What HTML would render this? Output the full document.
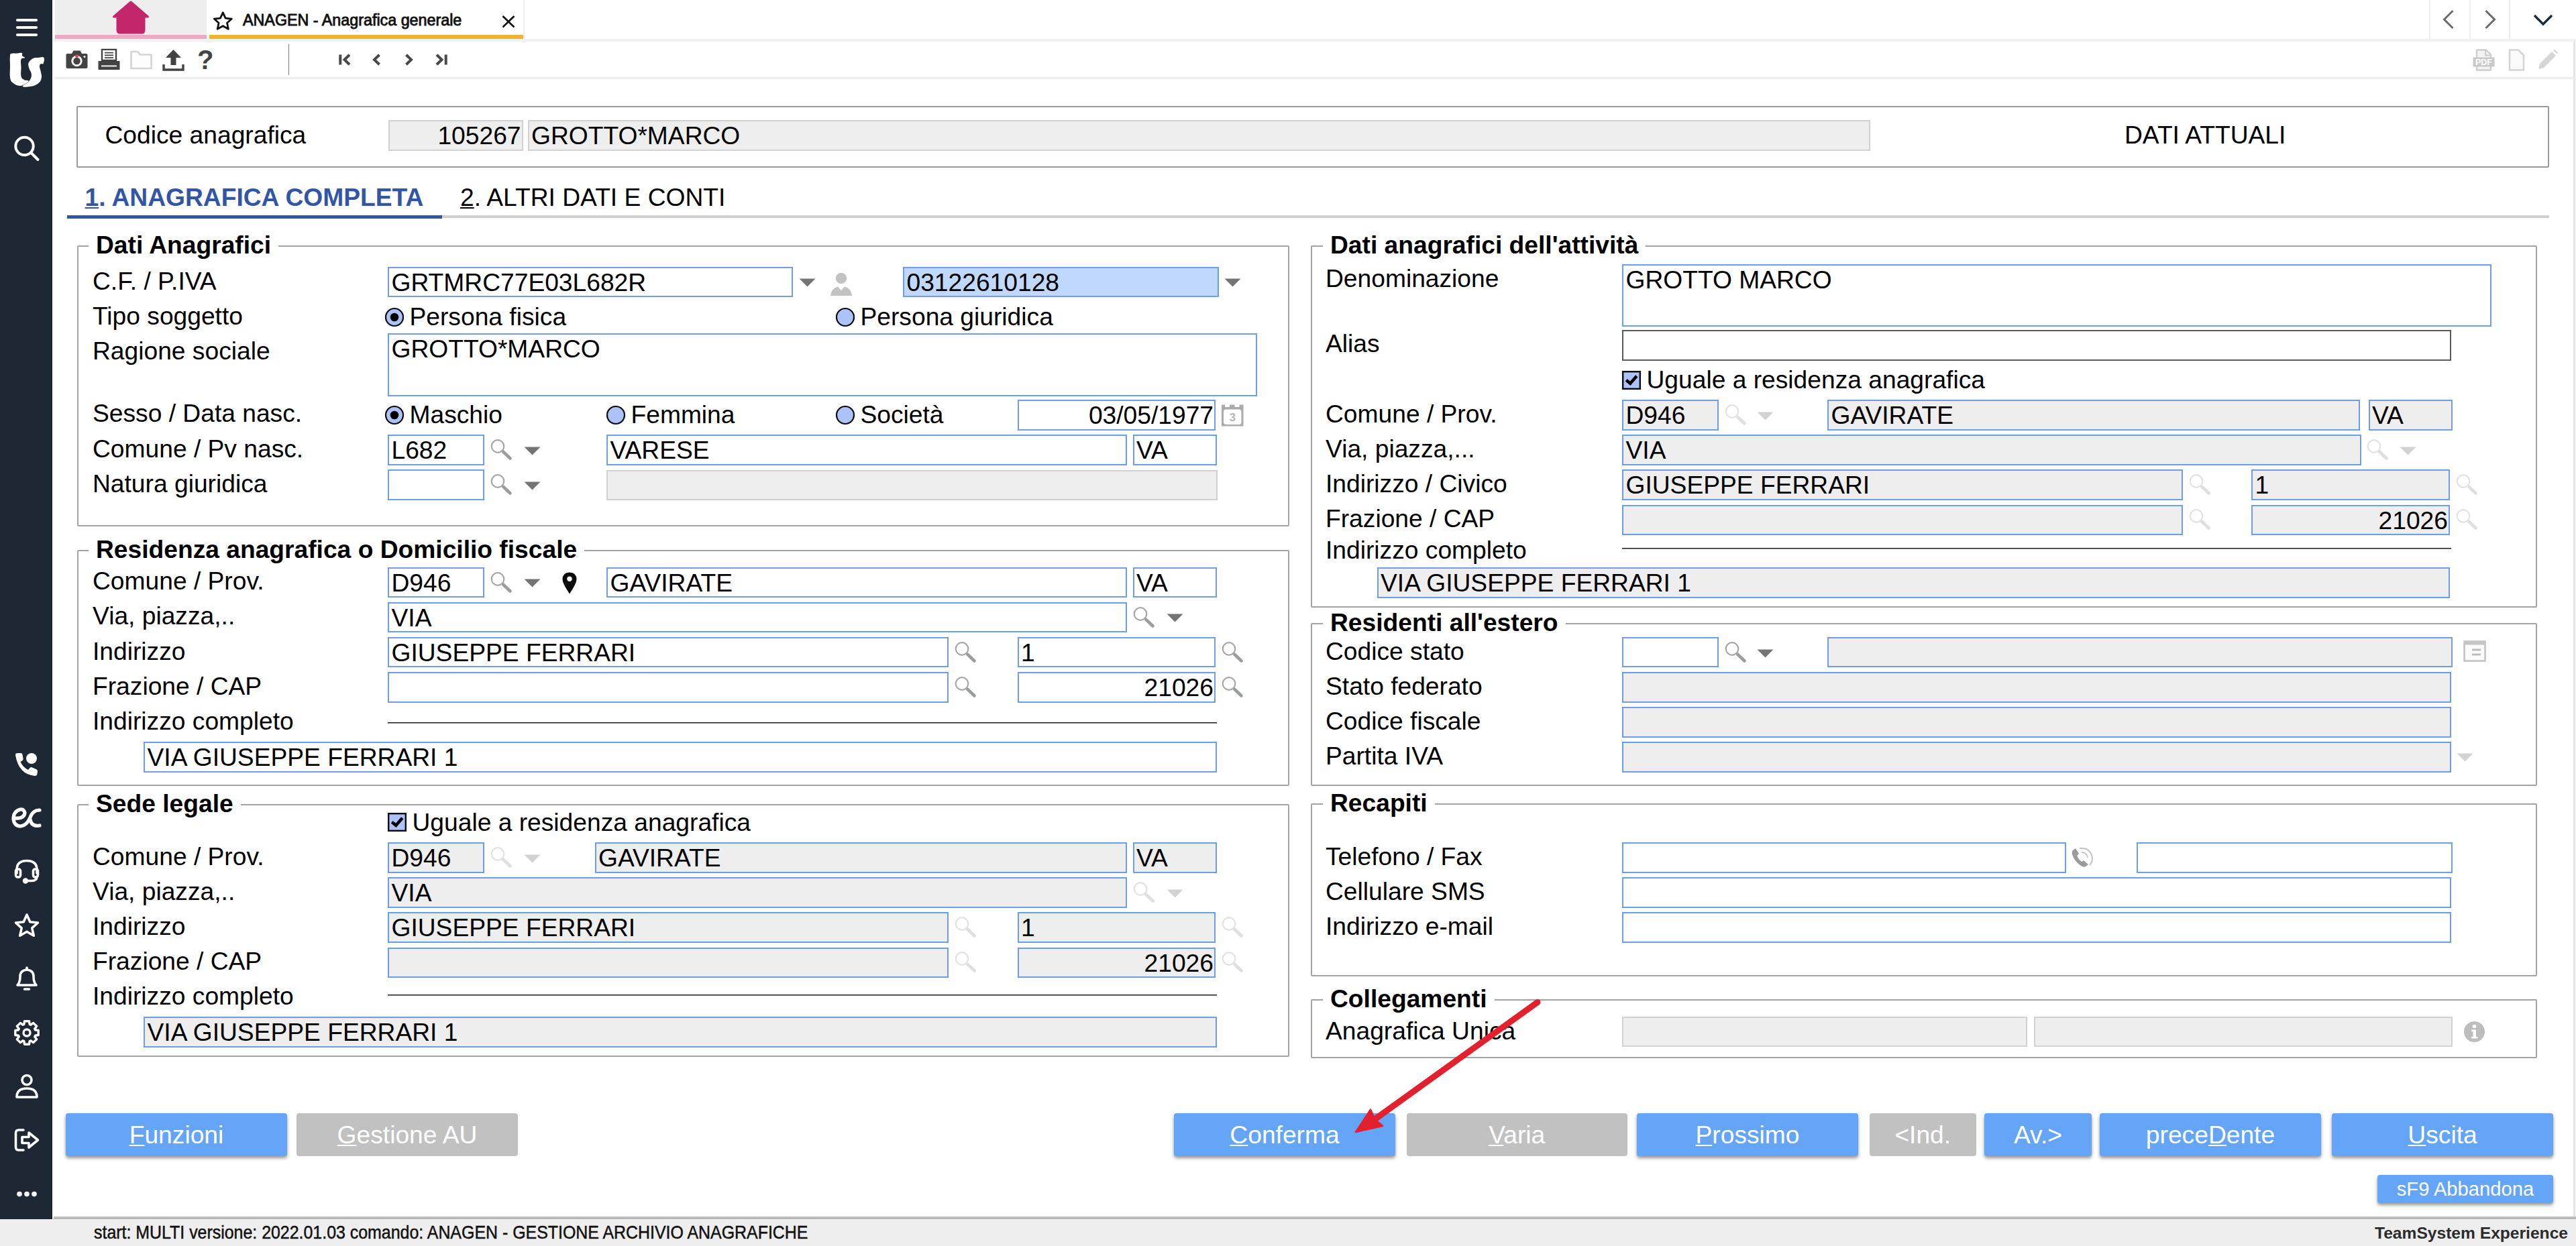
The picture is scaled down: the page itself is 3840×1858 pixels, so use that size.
<!DOCTYPE html>
<html lang="it"><head><meta charset="utf-8"><title>ANAGEN - Anagrafica generale</title>
<style>
html,body{margin:0;padding:0;}
body{width:3840px;height:1858px;overflow:hidden;background:#fff;position:relative;
 font-family:"Liberation Sans",sans-serif;font-size:37.2px;color:#000;}
.a{position:absolute;box-sizing:border-box;white-space:nowrap;}
.t{position:absolute;white-space:nowrap;line-height:45px;height:45px;}
.in{position:absolute;box-sizing:border-box;white-space:nowrap;height:45.6px;line-height:42.2px;
 border:2px solid #6c9fe8;background:#fff;padding:0 4px 0 3.5px;overflow:hidden;}
.in.d{background:#eeeeee;}
.in.r{text-align:right;padding-right:1px;}
.in.hl{background:#c0d8fb;}
.in.g{border:2px solid #d2d2d2;background:#eeeeee;}
.grp{position:absolute;box-sizing:border-box;border:2px solid #a3a3a3;border-radius:2px;}
.lg{position:absolute;white-space:nowrap;font-weight:bold;background:#fff;line-height:44px;height:44px;padding:0 11px;}
.btn{position:absolute;box-sizing:border-box;text-align:center;color:#fff;border-radius:4px;white-space:nowrap;}
.btn.b{background:#64a5f8;box-shadow:0 3px 5px rgba(0,0,0,.42);}
.btn.g{background:#c1c1c1;}
u{text-decoration-thickness:2.4px;text-underline-offset:2px;}
svg{position:absolute;overflow:visible;}
</style></head>
<body>
<div class="a" style="left:0;top:0;width:78px;height:1818px;background:#1e2835;"></div>
<svg style="left:0;top:0" width="78" height="70"><g stroke="#fff" fill="none" stroke-linecap="round" stroke-linejoin="round" stroke-width="4.2"><line x1="26" y1="30" x2="54" y2="30"/><line x1="26" y1="41" x2="54" y2="41"/><line x1="26" y1="52" x2="54" y2="52"/></g></svg>
<svg style="left:15px;top:79px" width="52" height="52" viewBox="0 0 52 52"><path d="M0.0 4.0 C0.6 -0.0 0.9 1.5 3.0 0.8 C5.1 0.1 6.9 0.8 10.0 0.6 C13.1 0.4 15.9 -0.7 17.6 0.0 C19.3 0.7 17.2 2.5 18.1 4.0 C19.0 5.5 22.3 6.1 22.0 7.3 C21.7 8.5 17.7 6.4 16.5 9.5 C15.3 12.6 16.5 16.7 16.5 22.0 C16.5 27.3 15.6 31.0 16.5 34.8 C17.4 38.6 18.6 38.5 21.0 39.9 C23.4 41.3 27.5 40.2 27.7 41.6 C27.9 43.0 24.8 45.1 22.0 46.6 C19.2 48.1 17.8 49.2 14.2 48.9 C10.6 48.6 7.6 47.4 4.7 45.0 C1.8 42.6 1.2 42.9 0.2 37.6 C-0.8 32.4 0.0 27.1 0.0 20.0 C-0.0 12.9 -0.6 8.0 0.0 4.0Z" fill="#fff"/><path d="M50.2 6.7 C48.6 4.9 45.3 6.7 42.0 7.0 C38.7 7.3 37.4 6.3 34.4 7.9 C31.4 9.5 29.0 11.5 27.7 14.6 C26.4 17.7 27.5 19.2 28.3 22.5 C29.1 25.8 31.0 27.1 31.6 30.3 C32.2 33.5 32.0 34.8 31.0 37.6 C29.9 40.4 29.2 41.2 26.6 43.8 C24.0 46.4 18.0 48.7 18.7 50.0 C19.4 51.3 25.3 50.8 30.0 50.0 C34.7 49.2 37.7 48.6 41.2 46.0 C44.7 43.4 45.9 41.5 46.8 37.6 C47.7 33.7 46.3 31.2 45.7 27.5 C45.1 23.8 44.0 22.6 44.0 20.2 C44.0 17.8 44.5 17.2 45.7 16.3 C46.9 15.4 48.7 17.7 49.6 15.7 C50.5 13.7 51.8 8.5 50.2 6.7Z" fill="#fff"/></svg>
<svg style="left:20px;top:202px" width="40" height="40" viewBox="0 0 40 40"><g stroke="#fff" fill="none" stroke-linecap="round" stroke-linejoin="round" stroke-width="4"><circle cx="16.500" cy="16" r="13.200"/><line x1="26" y1="25.500" x2="36.500" y2="36"/></g></svg>
<svg style="left:20px;top:1120px" width="40" height="40" viewBox="0 0 40 40"><g fill="#fff"><circle cx="27" cy="11" r="8"/><path d="M3 6 Q3 3 6 3 L11 3 Q13 3 13.5 5 L14.5 11 Q15 13 13.5 14 L10.5 16 Q14 24 22 28 L24.5 25 Q26 23.5 28 24.5 L34 27 Q36 28 36 30 L35.5 34 Q35 37 32 37 Q8 35 3 6 Z"/></g></svg>
<svg style="left:16px;top:1202px" width="48" height="36" viewBox="0 0 48 36"><g stroke="#fff" fill="none" stroke-linecap="round" stroke-linejoin="round" stroke-width="5.2"><path d="M7 18 Q20 19 21 10 Q20 4 14 5 Q4 8 4 19 Q5 30 15 30 Q24 29 29 17 Q33 6 43 6"/><path d="M43 29 Q31 31 29 20"/></g></svg>
<svg style="left:20px;top:1280px" width="40" height="40" viewBox="0 0 40 40"><g stroke="#fff" fill="none" stroke-linecap="round" stroke-linejoin="round" stroke-width="3.6"><path d="M5 22 V17 Q5 3.5 20 3.5 Q35 3.5 35 17 V22"/><rect x="3.5" y="16" width="7" height="12" rx="3"/><rect x="29.500" y="16" width="7" height="12" rx="3"/><path d="M35 27 Q35 33.500 27 33.500 H21"/></g><circle cx="18" cy="33.500" r="4.200" fill="#fff"/></svg>
<svg style="left:20px;top:1360px" width="40" height="40" viewBox="0 0 40 40"><g stroke="#fff" fill="none" stroke-linecap="round" stroke-linejoin="round" stroke-width="3.600"><path d="M20 4 L24.800 14.800 L36.500 16 L27.700 23.800 L30.300 35.300 L20 29.300 L9.700 35.300 L12.300 23.800 L3.500 16 L15.200 14.800 Z"/></g></svg>
<svg style="left:20px;top:1440px" width="40" height="40" viewBox="0 0 40 40"><g stroke="#fff" fill="none" stroke-linecap="round" stroke-linejoin="round" stroke-width="3.600"><path d="M6 29 Q10 25 10 16 Q10 7 20 6 Q30 7 30 16 Q30 25 34 29 Z"/><path d="M20 6 V3"/><path d="M16.500 35 H23.500"/></g></svg>
<svg style="left:20px;top:1520px" width="40" height="40" viewBox="0 0 40 40"><g stroke="#fff" fill="none" stroke-linecap="round" stroke-linejoin="round" stroke-width="3.400"><path d="M16.5 2.8 L23.5 2.8 L24.2 7.5 L25.9 8.2 L29.7 5.4 L34.6 10.3 L31.8 14.1 L32.5 15.8 L37.2 16.5 L37.2 23.5 L32.5 24.2 L31.8 25.9 L34.6 29.7 L29.7 34.6 L25.9 31.8 L24.2 32.5 L23.5 37.2 L16.5 37.2 L15.8 32.5 L14.1 31.8 L10.3 34.6 L5.4 29.7 L8.2 25.9 L7.5 24.2 L2.8 23.5 L2.8 16.5 L7.5 15.8 L8.2 14.1 L5.4 10.3 L10.3 5.4 L14.1 8.2 L15.8 7.5Z"/><circle cx="20" cy="20" r="5"/></g></svg>
<svg style="left:20px;top:1600px" width="40" height="40" viewBox="0 0 40 40"><g stroke="#fff" fill="none" stroke-linecap="round" stroke-linejoin="round" stroke-width="3.600"><circle cx="20" cy="10.500" r="7"/><path d="M5 36 Q5 23 20 23 Q35 23 35 36 Z"/></g></svg>
<svg style="left:20px;top:1680px" width="40" height="40" viewBox="0 0 40 40"><g stroke="#fff" fill="none" stroke-linecap="round" stroke-linejoin="round" stroke-width="3.600"><path d="M15 5 H8 Q3.500 5 3.500 9.500 V30.500 Q3.500 35 8 35 H15"/><path d="M13 15.500 H23 V9 L36.500 20 L23 31 V24.500 H13 Z"/></g></svg>
<svg style="left:20px;top:1770px" width="40" height="20"><g fill="#fff"><circle cx="9" cy="10.500" r="3.800"/><circle cx="20" cy="10.500" r="3.800"/><circle cx="31" cy="10.500" r="3.800"/></g></svg>
<div class="a" style="left:78px;top:58px;width:3762px;height:4px;background:#f1f1f1;"></div>
<div class="a" style="left:82px;top:0;width:226px;height:52px;background:#eeeeee;"></div>
<div class="a" style="left:82px;top:52px;width:226px;height:6px;background:#eba9c4;"></div>
<svg style="left:160px;top:0" width="70" height="52" viewBox="0 0 70 52"><path d="M35 3 L60.500 25 H55 V45 Q55 49 51 49 H19 Q15 49 15 45 V25 H9.500 Z" fill="#c3266b" stroke="#c3266b" stroke-width="3" stroke-linejoin="round"/></svg>
<div class="a" style="left:312px;top:52px;width:468px;height:6px;background:#f0b32b;"></div>
<svg style="left:316.500px;top:15.500px" width="30.600" height="28.800" viewBox="0 0 34 32"><path d="M17 3 L21.300 12.300 L31.500 13.400 L23.900 20.300 L26 30.300 L17 25.200 L8 30.300 L10.100 20.300 L2.500 13.400 L12.700 12.300 Z" fill="none" stroke="#111" stroke-width="3.100" stroke-linejoin="round"/></svg>
<div class="a" id="tabtitle" style="left:362px;top:10px;height:40px;line-height:40px;font-size:23.300px;color:#111;-webkit-text-stroke:0.850px #111;">ANAGEN - Anagrafica generale</div>
<svg style="left:746px;top:21px" width="24" height="22"><path d="M3.500 3 L20.500 19.500 M20.500 3 L3.500 19.500" stroke="#111" stroke-width="2.600" fill="none"/></svg>
<div class="a" style="left:780px;top:0;width:2px;height:58px;background:#efefef;"></div>
<div class="a" style="left:3621px;top:0;width:2px;height:58px;background:#ececec;"></div>
<div class="a" style="left:3681px;top:0;width:2px;height:58px;background:#ececec;"></div>
<div class="a" style="left:3740px;top:0;width:2px;height:58px;background:#ececec;"></div>
<svg style="left:3638px;top:12px" width="24" height="34"><path d="M18.500 4 L5.500 17 L18.500 30" stroke="#6a6a6a" stroke-width="3" fill="none"/></svg>
<svg style="left:3700px;top:12px" width="24" height="34"><path d="M5.500 4 L18.500 17 L5.500 30" stroke="#6a6a6a" stroke-width="3" fill="none"/></svg>
<svg style="left:3774px;top:18px" width="34" height="24"><path d="M4 5 L17 18 L30 5" stroke="#1d2c3c" stroke-width="3.400" fill="none"/></svg>
<div class="a" style="left:3836px;top:61px;width:3px;height:1754px;background:#e4e4e4;"></div>
<div class="a" style="left:82px;top:115px;width:3758px;height:3px;background:#ededed;"></div>
<div class="a" style="left:430px;top:66px;width:1px;height:46px;background:#7a7a7a;"></div>
<svg style="left:98px;top:73px" width="33" height="31" viewBox="0 0 33 31"><path d="M2.500 7 H9 L11.500 2.500 H21.500 L24 7 H30.500 Q32.500 7 32.500 9 V27 Q32.500 29 30.500 29 H2.500 Q0.500 29 0.500 27 V9 Q0.500 7 2.500 7 Z" fill="#434343"/><circle cx="16.500" cy="18" r="8.200" fill="#f4f4f4"/><circle cx="16.500" cy="18" r="5.200" fill="#444"/><circle cx="16.500" cy="10.500" r="2.400" fill="#d8443c"/><circle cx="28" cy="11.500" r="1.600" fill="#eee"/></svg>
<svg style="left:146px;top:73px" width="33" height="32" viewBox="0 0 33 34" preserveAspectRatio="none"><path d="M6 1 H27 V18 H6 Z" fill="#fff" stroke="#434343" stroke-width="2.400"/><path d="M10 6 H23 M10 10 H23 M10 14 H23" stroke="#434343" stroke-width="1.800"/><path d="M0.500 19 H32.500 V33 H0.500 Z" fill="#434343"/><path d="M5 27 H28" stroke="#eee" stroke-width="2.200"/></svg>
<svg style="left:194px;top:75px" width="33" height="29" viewBox="0 0 33 29"><path d="M1.500 2 H11 L14.500 6.500 H31.500 V27 H1.500 Z" fill="#fdfdfd" stroke="#d4d4d4" stroke-width="2.600" stroke-linejoin="round"/></svg>
<svg style="left:242px;top:73px" width="33" height="33" viewBox="0 0 33 33"><path d="M16.500 1 L28 13 H20.500 V24 H12.500 V13 H5 Z" fill="#434343"/><path d="M2 23 V31 H31 V23" fill="none" stroke="#434343" stroke-width="3.400"/></svg>
<div class="a" style="left:294px;top:64px;height:50px;line-height:50px;font-size:40px;font-weight:bold;color:#434343;">?</div>
<svg style="left:503px;top:78px" width="22" height="22"><path d="M4.300 3.500 V18.500 M18 3.800 L10.500 11 L18 18.200" stroke="#484848" stroke-width="4" fill="none"/></svg>
<svg style="left:552px;top:78px" width="18" height="22"><path d="M13.500 3.800 L6 11 L13.500 18.200" stroke="#484848" stroke-width="4" fill="none"/></svg>
<svg style="left:601px;top:78px" width="18" height="22"><path d="M4.500 3.800 L12 11 L4.500 18.200" stroke="#484848" stroke-width="4" fill="none"/></svg>
<svg style="left:647px;top:78px" width="22" height="22"><path d="M17.700 3.500 V18.500 M4 3.800 L11.500 11 L4 18.200" stroke="#484848" stroke-width="4" fill="none"/></svg>
<svg style="left:3686px;top:73px" width="33" height="33" viewBox="0 0 33 33"><path d="M6 1.500 H20 L27 8.500 V31.500 H6 Z" fill="#f3f3f3" stroke="#cdcdcd" stroke-width="2.400" stroke-linejoin="round"/><path d="M19 1.500 V9.500 H27" fill="none" stroke="#cdcdcd" stroke-width="2"/><rect x="0.500" y="12.500" width="32" height="14" fill="#c9c9c9"/><text x="16.500" y="24" font-size="12.500" font-weight="bold" fill="#fff" text-anchor="middle" font-family="Liberation Sans, sans-serif">PDF</text></svg>
<svg style="left:3739px;top:73px" width="25" height="33" viewBox="0 0 25 33"><path d="M2 1.500 H15 L23 9.500 V31.500 H2 Z" fill="#fafafa" stroke="#d4d4d4" stroke-width="2.600" stroke-linejoin="round"/></svg>
<svg style="left:3781px;top:73px" width="33" height="33" viewBox="0 0 33 33"><path d="M3 30 L5 22 L23 4 L29 10 L11 28 Z" fill="#d6d6d6"/><path d="M25 2 L27 0.500 L32 5.500 L30.500 7.500 Z" fill="#d6d6d6"/></svg>
<div class="grp" style="left:114px;top:158px;width:3686px;height:92px;border-color:#9a9a9a;"></div>
<div class="t" style="left:156.5px;top:179.2px;">Codice anagrafica</div>
<div class="in g r" style="left:578.5px;top:179.4px;width:201.5px;height:46.1px;padding-right:1.5px;">105267</div>
<div class="in g" style="left:786.5px;top:179.4px;width:2001.0px;height:46.1px;">GROTTO*MARCO</div>
<div class="t" style="left:3167px;top:179.2px;">DATI ATTUALI</div>
<div class="a" style="left:100px;top:321px;width:3700px;height:4px;background:#cfcfcf;"></div>
<div class="a" style="left:100px;top:320.500px;width:559px;height:5px;background:#3457a5;"></div>
<div class="t" style="left:126.5px;top:272.1px;color:#3256a5;"><b><u>1</u>. ANAGRAFICA COMPLETA</b></div>
<div class="t" style="left:686px;top:272.1px;"><u>2</u>. ALTRI DATI E CONTI</div>
<div class="grp" style="left:115px;top:366px;width:1807px;height:419px;"></div>
<div class="lg" style="left:132px;top:343px;">Dati Anagrafici</div>
<div class="t" style="left:138px;top:396.8px;">C.F. / P.IVA</div>
<div class="in " style="left:578.0px;top:397.9px;width:604.0px;">GRTMRC77E03L682R</div>
<svg style="left:1190.5px;top:415px;opacity:1.0" width="25" height="13" viewBox="0 0 25 13"><path d="M0.5 0.5H24.5L12.5 12.5Z" fill="#747474"/></svg>
<svg style="left:1237px;top:405px" width="34" height="38" viewBox="0 0 34 38"><g fill="#c2c2c2"><circle cx="17" cy="10" r="8.200"/><path d="M1 36 Q3 24 12 22.500 L17 28 L22 22.500 Q31 24 33 36 Z"/></g></svg>
<div class="in hl" style="left:1346.0px;top:397.9px;width:471.0px;">03122610128</div>
<svg style="left:1825px;top:415px;opacity:1.0" width="25" height="13" viewBox="0 0 25 13"><path d="M0.5 0.5H24.5L12.5 12.5Z" fill="#747474"/></svg>
<div class="t" style="left:138px;top:448.8px;">Tipo soggetto</div>
<svg style="left:573px;top:458px" width="30" height="30"><circle cx="15" cy="15" r="13" fill="#adc2f8" stroke="#0c0c0c" stroke-width="2.200"/><circle cx="15" cy="15" r="6.300" fill="#000"/></svg>
<div class="t" style="left:610.5px;top:449.7px;">Persona fisica</div>
<svg style="left:1245px;top:458px" width="30" height="30"><circle cx="15" cy="15" r="13" fill="#adc2f8" stroke="#0c0c0c" stroke-width="2.200"/></svg>
<div class="t" style="left:1282.5px;top:449.7px;">Persona giuridica</div>
<div class="t" style="left:138px;top:501.0px;">Ragione sociale</div>
<div class="in " style="left:578.0px;top:497.4px;width:1296.0px;height:93.6px;">GROTTO*MARCO</div>
<div class="t" style="left:138px;top:594.3px;">Sesso / Data nasc.</div>
<svg style="left:573px;top:604px" width="30" height="30"><circle cx="15" cy="15" r="13" fill="#adc2f8" stroke="#0c0c0c" stroke-width="2.200"/><circle cx="15" cy="15" r="6.300" fill="#000"/></svg>
<div class="t" style="left:610.5px;top:595.7px;">Maschio</div>
<svg style="left:903px;top:604px" width="30" height="30"><circle cx="15" cy="15" r="13" fill="#adc2f8" stroke="#0c0c0c" stroke-width="2.200"/></svg>
<div class="t" style="left:940.5px;top:595.7px;">Femmina</div>
<svg style="left:1245px;top:604px" width="30" height="30"><circle cx="15" cy="15" r="13" fill="#adc2f8" stroke="#0c0c0c" stroke-width="2.200"/></svg>
<div class="t" style="left:1282.5px;top:595.7px;">Società</div>
<div class="in r" style="left:1516.5px;top:596.4px;width:295.5px;">03/05/1977</div>
<svg style="left:1821px;top:602.500px" width="33" height="33" viewBox="0 0 33 33"><rect x="0" y="0.500" width="32.500" height="32" fill="#ababab"/><rect x="5" y="0" width="7" height="4" fill="#fff"/><rect x="19.500" y="0" width="7" height="4" fill="#fff"/><rect x="3" y="7.500" width="26.500" height="22.500" rx="3.500" fill="#fff"/><text x="16.300" y="25" font-size="16.500" font-weight="bold" fill="#b4b4b4" text-anchor="middle" font-family="Liberation Sans, sans-serif">3</text></svg>
<div class="t" style="left:138px;top:646.8px;">Comune / Pv nasc.</div>
<div class="in " style="left:578.0px;top:648.4px;width:143.5px;">L682</div>
<svg style="left:730.5px;top:655.0px;opacity:1.0" width="33" height="33" viewBox="0 0 33 33"><line x1="19" y1="18.5" x2="29.5" y2="28.5" stroke="#9a9e9a" stroke-width="4.6" stroke-linecap="round"/><circle cx="11" cy="10.5" r="9.3" fill="#fff" stroke="#a6a6a6" stroke-width="2.2"/></svg>
<svg style="left:780.5px;top:666px;opacity:1.0" width="25" height="13" viewBox="0 0 25 13"><path d="M0.5 0.5H24.5L12.5 12.5Z" fill="#747474"/></svg>
<div class="in " style="left:904.0px;top:648.4px;width:776.0px;">VARESE</div>
<div class="in " style="left:1688.5px;top:648.4px;width:125.5px;">VA</div>
<div class="t" style="left:138px;top:698.8px;">Natura giuridica</div>
<div class="in " style="left:578.0px;top:700.4px;width:143.5px;"></div>
<svg style="left:730.5px;top:707px;opacity:1.0" width="33" height="33" viewBox="0 0 33 33"><line x1="19" y1="18.5" x2="29.5" y2="28.5" stroke="#9a9e9a" stroke-width="4.6" stroke-linecap="round"/><circle cx="11" cy="10.5" r="9.3" fill="#fff" stroke="#a6a6a6" stroke-width="2.2"/></svg>
<svg style="left:780.5px;top:718px;opacity:1.0" width="25" height="13" viewBox="0 0 25 13"><path d="M0.5 0.5H24.5L12.5 12.5Z" fill="#747474"/></svg>
<div class="in g" style="left:904.0px;top:701.4px;width:911.0px;height:44.6px;"></div>
<div class="grp" style="left:115px;top:820px;width:1807px;height:352px;"></div>
<div class="lg" style="left:132px;top:797px;">Residenza anagrafica o Domicilio fiscale</div>
<div class="t" style="left:138px;top:844.3px;">Comune / Prov.</div>
<div class="in " style="left:578.0px;top:845.6px;width:143.5px;">D946</div>
<svg style="left:730.5px;top:852.5px;opacity:1.0" width="33" height="33" viewBox="0 0 33 33"><line x1="19" y1="18.5" x2="29.5" y2="28.5" stroke="#9a9e9a" stroke-width="4.6" stroke-linecap="round"/><circle cx="11" cy="10.5" r="9.3" fill="#fff" stroke="#a6a6a6" stroke-width="2.2"/></svg>
<svg style="left:780.5px;top:863.2px;opacity:1.0" width="25" height="13" viewBox="0 0 25 13"><path d="M0.5 0.5H24.5L12.5 12.5Z" fill="#747474"/></svg>
<svg style="left:838px;top:852.7px" width="22" height="33" viewBox="0 0 22 33"><path d="M11 0.500 Q21.500 0.800 21.500 11 Q21.500 17 11 32.500 Q0.500 17 0.500 11 Q0.500 0.800 11 0.500 Z" fill="#0a0a0a"/><circle cx="11" cy="10.300" r="3.700" fill="#fff"/></svg>
<div class="in " style="left:904.0px;top:845.6px;width:776.0px;">GAVIRATE</div>
<div class="in " style="left:1688.5px;top:845.6px;width:125.5px;">VA</div>
<div class="t" style="left:138px;top:896.4px;">Via, piazza,..</div>
<div class="in " style="left:578.0px;top:897.7px;width:1102.0px;">VIA</div>
<svg style="left:1689px;top:904.5999999999999px;opacity:1.0" width="33" height="33" viewBox="0 0 33 33"><line x1="19" y1="18.5" x2="29.5" y2="28.5" stroke="#9a9e9a" stroke-width="4.6" stroke-linecap="round"/><circle cx="11" cy="10.5" r="9.3" fill="#fff" stroke="#a6a6a6" stroke-width="2.2"/></svg>
<svg style="left:1738.5px;top:915.3px;opacity:1.0" width="25" height="13" viewBox="0 0 25 13"><path d="M0.5 0.5H24.5L12.5 12.5Z" fill="#747474"/></svg>
<div class="t" style="left:138px;top:948.6px;">Indirizzo</div>
<div class="in " style="left:578.0px;top:949.9px;width:835.5px;">GIUSEPPE FERRARI</div>
<svg style="left:1423px;top:956.8px;opacity:1.0" width="33" height="33" viewBox="0 0 33 33"><line x1="19" y1="18.5" x2="29.5" y2="28.5" stroke="#9a9e9a" stroke-width="4.6" stroke-linecap="round"/><circle cx="11" cy="10.5" r="9.3" fill="#fff" stroke="#a6a6a6" stroke-width="2.2"/></svg>
<div class="in " style="left:1516.5px;top:949.9px;width:295.5px;">1</div>
<svg style="left:1821px;top:956.8px;opacity:1.0" width="33" height="33" viewBox="0 0 33 33"><line x1="19" y1="18.5" x2="29.5" y2="28.5" stroke="#9a9e9a" stroke-width="4.6" stroke-linecap="round"/><circle cx="11" cy="10.5" r="9.3" fill="#fff" stroke="#a6a6a6" stroke-width="2.2"/></svg>
<div class="t" style="left:138px;top:1000.7px;">Frazione / CAP</div>
<div class="in " style="left:578.0px;top:1002.0px;width:835.5px;"></div>
<svg style="left:1423px;top:1008.9px;opacity:1.0" width="33" height="33" viewBox="0 0 33 33"><line x1="19" y1="18.5" x2="29.5" y2="28.5" stroke="#9a9e9a" stroke-width="4.6" stroke-linecap="round"/><circle cx="11" cy="10.5" r="9.3" fill="#fff" stroke="#a6a6a6" stroke-width="2.2"/></svg>
<div class="in r" style="left:1516.5px;top:1002.0px;width:295.5px;">21026</div>
<svg style="left:1821px;top:1008.9px;opacity:1.0" width="33" height="33" viewBox="0 0 33 33"><line x1="19" y1="18.5" x2="29.5" y2="28.5" stroke="#9a9e9a" stroke-width="4.6" stroke-linecap="round"/><circle cx="11" cy="10.5" r="9.3" fill="#fff" stroke="#a6a6a6" stroke-width="2.2"/></svg>
<div class="t" style="left:138px;top:1052.6px;">Indirizzo completo</div>
<div class="a" style="left:578px;top:1077px;width:1236px;height:2px;background:linear-gradient(#1a1a1a 50%,#8d8d8d 50%);"></div>
<div class="in " style="left:214.0px;top:1106.2px;width:1600.0px;">VIA GIUSEPPE FERRARI 1</div>
<div class="grp" style="left:115px;top:1199px;width:1807px;height:377px;"></div>
<div class="lg" style="left:132px;top:1176px;">Sede legale</div>
<svg style="left:578px;top:1212px" width="28" height="28"><rect x="1.200" y="1.200" width="25.600" height="25.600" fill="#adc2f8" stroke="#0c0c0c" stroke-width="2.400"/><path d="M6.200 13.800 L12.200 18.800 L21.800 7.800" fill="none" stroke="#000" stroke-width="4.600"/></svg>
<div class="t" style="left:614.5px;top:1203.7px;">Uguale a residenza anagrafica</div>
<div class="t" style="left:138px;top:1254.9px;">Comune / Prov.</div>
<div class="in d" style="left:578.0px;top:1256.2px;width:143.5px;">D946</div>
<svg style="left:730.5px;top:1263.1px;opacity:0.32" width="33" height="33" viewBox="0 0 33 33"><line x1="19" y1="18.5" x2="29.5" y2="28.5" stroke="#9a9e9a" stroke-width="4.6" stroke-linecap="round"/><circle cx="11" cy="10.5" r="9.3" fill="#fff" stroke="#a6a6a6" stroke-width="2.2"/></svg>
<svg style="left:780.5px;top:1273.8px;opacity:0.32" width="25" height="13" viewBox="0 0 25 13"><path d="M0.5 0.5H24.5L12.5 12.5Z" fill="#747474"/></svg>
<div class="in d" style="left:886.5px;top:1256.2px;width:793.5px;">GAVIRATE</div>
<div class="in d" style="left:1688.5px;top:1256.2px;width:125.5px;">VA</div>
<div class="t" style="left:138px;top:1307.0px;">Via, piazza,..</div>
<div class="in d" style="left:578.0px;top:1308.3px;width:1102.0px;">VIA</div>
<svg style="left:1689px;top:1315.2px;opacity:0.32" width="33" height="33" viewBox="0 0 33 33"><line x1="19" y1="18.5" x2="29.5" y2="28.5" stroke="#9a9e9a" stroke-width="4.6" stroke-linecap="round"/><circle cx="11" cy="10.5" r="9.3" fill="#fff" stroke="#a6a6a6" stroke-width="2.2"/></svg>
<svg style="left:1738.5px;top:1325.9px;opacity:0.32" width="25" height="13" viewBox="0 0 25 13"><path d="M0.5 0.5H24.5L12.5 12.5Z" fill="#747474"/></svg>
<div class="t" style="left:138px;top:1359.1px;">Indirizzo</div>
<div class="in d" style="left:578.0px;top:1360.4px;width:835.5px;">GIUSEPPE FERRARI</div>
<svg style="left:1423px;top:1367.3px;opacity:0.32" width="33" height="33" viewBox="0 0 33 33"><line x1="19" y1="18.5" x2="29.5" y2="28.5" stroke="#9a9e9a" stroke-width="4.6" stroke-linecap="round"/><circle cx="11" cy="10.5" r="9.3" fill="#fff" stroke="#a6a6a6" stroke-width="2.2"/></svg>
<div class="in d" style="left:1516.5px;top:1360.4px;width:295.5px;">1</div>
<svg style="left:1821px;top:1367.3px;opacity:0.32" width="33" height="33" viewBox="0 0 33 33"><line x1="19" y1="18.5" x2="29.5" y2="28.5" stroke="#9a9e9a" stroke-width="4.6" stroke-linecap="round"/><circle cx="11" cy="10.5" r="9.3" fill="#fff" stroke="#a6a6a6" stroke-width="2.2"/></svg>
<div class="t" style="left:138px;top:1411.2px;">Frazione / CAP</div>
<div class="in d" style="left:578.0px;top:1412.5px;width:835.5px;"></div>
<svg style="left:1423px;top:1419.3999999999999px;opacity:0.32" width="33" height="33" viewBox="0 0 33 33"><line x1="19" y1="18.5" x2="29.5" y2="28.5" stroke="#9a9e9a" stroke-width="4.6" stroke-linecap="round"/><circle cx="11" cy="10.5" r="9.3" fill="#fff" stroke="#a6a6a6" stroke-width="2.2"/></svg>
<div class="in d r" style="left:1516.5px;top:1412.5px;width:295.5px;">21026</div>
<svg style="left:1821px;top:1419.3999999999999px;opacity:0.32" width="33" height="33" viewBox="0 0 33 33"><line x1="19" y1="18.5" x2="29.5" y2="28.5" stroke="#9a9e9a" stroke-width="4.6" stroke-linecap="round"/><circle cx="11" cy="10.5" r="9.3" fill="#fff" stroke="#a6a6a6" stroke-width="2.2"/></svg>
<div class="t" style="left:138px;top:1462.8px;">Indirizzo completo</div>
<div class="a" style="left:578px;top:1483px;width:1236px;height:2px;background:linear-gradient(#1a1a1a 50%,#8d8d8d 50%);"></div>
<div class="in d" style="left:214.0px;top:1516.4px;width:1600.0px;">VIA GIUSEPPE FERRARI 1</div>
<div class="grp" style="left:1954px;top:366px;width:1828px;height:540px;"></div>
<div class="lg" style="left:1972px;top:343px;">Dati anagrafici dell'attività</div>
<div class="t" style="left:1976px;top:392.5px;">Denominazione</div>
<div class="in " style="left:2418.0px;top:393.9px;width:1296.0px;height:93.6px;">GROTTO MARCO</div>
<div class="t" style="left:1976px;top:490.0px;">Alias</div>
<div class="in " style="left:2418.0px;top:492.1px;width:1236.0px;height:45.6px;border-color:#5b5b5b;"></div>
<svg style="left:2418px;top:552.5px" width="28" height="28"><rect x="1.200" y="1.200" width="25.600" height="25.600" fill="#adc2f8" stroke="#0c0c0c" stroke-width="2.400"/><path d="M6.200 13.800 L12.200 18.800 L21.800 7.800" fill="none" stroke="#000" stroke-width="4.600"/></svg>
<div class="t" style="left:2454.5px;top:544.2px;">Uguale a residenza anagrafica</div>
<div class="t" style="left:1976px;top:594.9px;">Comune / Prov.</div>
<div class="in d" style="left:2418.0px;top:596.2px;width:143.5px;">D946</div>
<svg style="left:2570.5px;top:603.0999999999999px;opacity:0.32" width="33" height="33" viewBox="0 0 33 33"><line x1="19" y1="18.5" x2="29.5" y2="28.5" stroke="#9a9e9a" stroke-width="4.6" stroke-linecap="round"/><circle cx="11" cy="10.5" r="9.3" fill="#fff" stroke="#a6a6a6" stroke-width="2.2"/></svg>
<svg style="left:2619px;top:613.8px;opacity:0.32" width="25" height="13" viewBox="0 0 25 13"><path d="M0.5 0.5H24.5L12.5 12.5Z" fill="#747474"/></svg>
<div class="in d" style="left:2724.0px;top:596.2px;width:794.0px;">GAVIRATE</div>
<div class="in d" style="left:3530.5px;top:596.2px;width:125.0px;">VA</div>
<div class="t" style="left:1976px;top:647.0px;">Via, piazza,...</div>
<div class="in d" style="left:2418.0px;top:648.3px;width:1102.0px;">VIA</div>
<svg style="left:3528px;top:655.1999999999999px;opacity:0.32" width="33" height="33" viewBox="0 0 33 33"><line x1="19" y1="18.5" x2="29.5" y2="28.5" stroke="#9a9e9a" stroke-width="4.6" stroke-linecap="round"/><circle cx="11" cy="10.5" r="9.3" fill="#fff" stroke="#a6a6a6" stroke-width="2.2"/></svg>
<svg style="left:3577px;top:665.9px;opacity:0.32" width="25" height="13" viewBox="0 0 25 13"><path d="M0.5 0.5H24.5L12.5 12.5Z" fill="#747474"/></svg>
<div class="t" style="left:1976px;top:699.1px;">Indirizzo / Civico</div>
<div class="in d" style="left:2418.0px;top:700.4px;width:835.5px;">GIUSEPPE FERRARI</div>
<svg style="left:3263px;top:707.3px;opacity:0.32" width="33" height="33" viewBox="0 0 33 33"><line x1="19" y1="18.5" x2="29.5" y2="28.5" stroke="#9a9e9a" stroke-width="4.6" stroke-linecap="round"/><circle cx="11" cy="10.5" r="9.3" fill="#fff" stroke="#a6a6a6" stroke-width="2.2"/></svg>
<div class="in d" style="left:3356.0px;top:700.4px;width:296.0px;">1</div>
<svg style="left:3661px;top:707.3px;opacity:0.32" width="33" height="33" viewBox="0 0 33 33"><line x1="19" y1="18.5" x2="29.5" y2="28.5" stroke="#9a9e9a" stroke-width="4.6" stroke-linecap="round"/><circle cx="11" cy="10.5" r="9.3" fill="#fff" stroke="#a6a6a6" stroke-width="2.2"/></svg>
<div class="t" style="left:1976px;top:751.2px;">Frazione / CAP</div>
<div class="in d" style="left:2418.0px;top:752.5px;width:835.5px;"></div>
<svg style="left:3263px;top:759.4px;opacity:0.32" width="33" height="33" viewBox="0 0 33 33"><line x1="19" y1="18.5" x2="29.5" y2="28.5" stroke="#9a9e9a" stroke-width="4.6" stroke-linecap="round"/><circle cx="11" cy="10.5" r="9.3" fill="#fff" stroke="#a6a6a6" stroke-width="2.2"/></svg>
<div class="in d r" style="left:3356.0px;top:752.5px;width:296.0px;">21026</div>
<svg style="left:3661px;top:759.4px;opacity:0.32" width="33" height="33" viewBox="0 0 33 33"><line x1="19" y1="18.5" x2="29.5" y2="28.5" stroke="#9a9e9a" stroke-width="4.6" stroke-linecap="round"/><circle cx="11" cy="10.5" r="9.3" fill="#fff" stroke="#a6a6a6" stroke-width="2.2"/></svg>
<div class="t" style="left:1976px;top:797.8px;">Indirizzo completo</div>
<div class="a" style="left:2418px;top:817px;width:1236px;height:2px;background:linear-gradient(#1a1a1a 50%,#8d8d8d 50%);"></div>
<div class="in d" style="left:2052.5px;top:846.1px;width:1599.5px;">VIA GIUSEPPE FERRARI 1</div>
<div class="grp" style="left:1954px;top:929px;width:1828px;height:243px;"></div>
<div class="lg" style="left:1972px;top:906px;">Residenti all'estero</div>
<div class="t" style="left:1976px;top:948.6px;">Codice stato</div>
<div class="in " style="left:2418.0px;top:949.9px;width:143.5px;"></div>
<svg style="left:2570.5px;top:956.8px;opacity:1.0" width="33" height="33" viewBox="0 0 33 33"><line x1="19" y1="18.5" x2="29.5" y2="28.5" stroke="#9a9e9a" stroke-width="4.6" stroke-linecap="round"/><circle cx="11" cy="10.5" r="9.3" fill="#fff" stroke="#a6a6a6" stroke-width="2.2"/></svg>
<svg style="left:2619px;top:967.5px;opacity:1.0" width="25" height="13" viewBox="0 0 25 13"><path d="M0.5 0.5H24.5L12.5 12.5Z" fill="#747474"/></svg>
<div class="in d" style="left:2724.0px;top:949.9px;width:931.5px;"></div>
<svg style="left:3672px;top:954.5px" width="34" height="32" viewBox="0 0 34 32"><rect x="1.500" y="1.500" width="31" height="29" fill="#fbfbfb" stroke="#c4c4c4" stroke-width="2.600"/><rect x="1.500" y="1.500" width="31" height="5" fill="#c4c4c4"/><path d="M13 14 H26 M13 21 H26" stroke="#bdbdbd" stroke-width="3"/></svg>
<div class="t" style="left:1976px;top:1000.7px;">Stato federato</div>
<div class="in d" style="left:2418.0px;top:1002.0px;width:1236.0px;"></div>
<div class="t" style="left:1976px;top:1052.8px;">Codice fiscale</div>
<div class="in d" style="left:2418.0px;top:1054.1px;width:1236.0px;"></div>
<div class="t" style="left:1976px;top:1104.9px;">Partita IVA</div>
<div class="in d" style="left:2418.0px;top:1106.2px;width:1236.0px;"></div>
<svg style="left:3661.5px;top:1123.3px;opacity:0.32" width="25" height="13" viewBox="0 0 25 13"><path d="M0.5 0.5H24.5L12.5 12.5Z" fill="#747474"/></svg>
<div class="grp" style="left:1954px;top:1198px;width:1828px;height:258px;"></div>
<div class="lg" style="left:1972px;top:1175px;">Recapiti</div>
<div class="t" style="left:1976px;top:1254.9px;">Telefono / Fax</div>
<div class="in " style="left:2418.0px;top:1256.2px;width:662.0px;"></div>
<svg style="left:3086px;top:1261.8px" width="36" height="34" viewBox="0 0 36 34"><path d="M4 6 Q2 8 3 12 Q6 22 16 29 Q20 32 23 30 L27 27 L20 21 L17 23 Q12 19 10 14 L13 11 L8 3 Z" fill="#9b9b9b"/><path d="M14 3 Q30 1 33 17 Q33 24 29 28" fill="none" stroke="#c6c6c6" stroke-width="2.200"/><path d="M17 9 Q25 9 26 17" fill="none" stroke="#c6c6c6" stroke-width="2"/></svg>
<div class="in " style="left:3184.5px;top:1256.2px;width:471.0px;"></div>
<div class="t" style="left:1976px;top:1307.0px;">Cellulare SMS</div>
<div class="in " style="left:2418.0px;top:1308.3px;width:1236.0px;"></div>
<div class="t" style="left:1976px;top:1359.1px;">Indirizzo e-mail</div>
<div class="in " style="left:2418.0px;top:1360.4px;width:1236.0px;"></div>
<div class="grp" style="left:1954px;top:1490px;width:1828px;height:88px;"></div>
<div class="lg" style="left:1972px;top:1467px;">Collegamenti</div>
<div class="t" style="left:1976px;top:1515.3px;">Anagrafica Unica</div>
<div class="in g" style="left:2418.0px;top:1515.9px;width:604.0px;height:45.6px;"></div>
<div class="in g" style="left:3032.0px;top:1515.9px;width:623.5px;height:45.6px;"></div>
<svg style="left:3672px;top:1522px" width="33" height="33"><circle cx="16.500" cy="16.500" r="15.500" fill="#bdbdbd"/><circle cx="16.500" cy="8.500" r="2.800" fill="#fff"/><path d="M12 13.500 H19 V24 H21.500 V26.500 H12 V24 H14.500 V16 H12 Z" fill="#fff"/></svg>
<div class="btn b" style="left:98px;top:1660px;width:330px;height:64px;line-height:65px;font-size:37.2px;"><u>F</u>unzioni</div>
<div class="btn g" style="left:442px;top:1660px;width:330px;height:64px;line-height:65px;font-size:37.2px;"><u>G</u>estione AU</div>
<div class="btn b" style="left:1750px;top:1660px;width:330px;height:64px;line-height:65px;font-size:37.2px;"><u>C</u>onferma</div>
<div class="btn g" style="left:2096.5px;top:1660px;width:329.5px;height:64px;line-height:65px;font-size:37.2px;"><u>V</u>aria</div>
<div class="btn b" style="left:2440px;top:1660px;width:330px;height:64px;line-height:65px;font-size:37.2px;"><u>P</u>rossimo</div>
<div class="btn g" style="left:2786.5px;top:1660px;width:159.5px;height:64px;line-height:65px;font-size:37.2px;">&lt;Ind.</div>
<div class="btn b" style="left:2958px;top:1660px;width:160px;height:64px;line-height:65px;font-size:37.2px;">Av.&gt;</div>
<div class="btn b" style="left:3130px;top:1660px;width:330px;height:64px;line-height:65px;font-size:37.2px;">prece<u>D</u>ente</div>
<div class="btn b" style="left:3476px;top:1660px;width:330px;height:64px;line-height:65px;font-size:37.2px;"><u>U</u>scita</div>
<div class="btn b" style="left:3544px;top:1752px;width:262px;height:42px;line-height:43px;font-size:29.2px;">sF9 Abbandona</div>
<div class="a" style="left:0;top:1818px;width:3840px;height:40px;background:#eeeeee;"></div>
<div class="a" style="left:80px;top:1814px;width:3760px;height:4px;background:linear-gradient(#c4c4c4,#b4b4b4);"></div>
<div class="a" id="status" style="left:140px;top:1818px;height:40px;line-height:40px;font-size:27.600px;color:#111;-webkit-text-stroke:0.500px #111;transform-origin:0 50%;transform:scaleX(0.9030);">start: MULTI versione: 2022.01.03 comando: ANAGEN - GESTIONE ARCHIVIO ANAGRAFICHE</div>
<div class="a" id="tse" style="right:12px;top:1819px;height:40px;line-height:40px;font-size:24.600px;font-weight:bold;color:#2c2c2c;">TeamSystem Experience</div>
<svg style="left:0;top:0" width="3840" height="1858"><g stroke="#e3202d" fill="#e3202d" stroke-linecap="round" stroke-linejoin="round"><line x1="2292" y1="1494.500" x2="2048" y2="1670" stroke-width="9"/><path d="M2021 1688 L2043 1654.500 L2049.500 1669 L2061 1679 Z" stroke-width="2.500"/></g></svg>
</body></html>
